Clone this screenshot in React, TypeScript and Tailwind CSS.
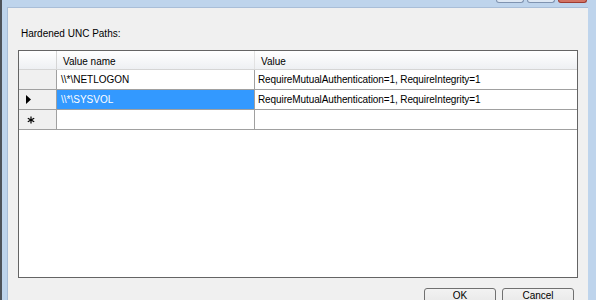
export default function App() {
  return (
    <div className="w-[596px] h-[300px] overflow-hidden flex flex-col bg-[#bed4ec] border-l-2 border-[#4e535a] font-['Liberation_Sans',Arial,sans-serif] text-[10px] text-black">
      {/* caption strip (window top is cut off) */}
      <div className="h-[7px] shrink-0 flex justify-end items-start gap-[3px] pr-[9px]">
        <div className="w-[28px] h-[3px] rounded-b-[3px] border border-t-0 border-[#7f93b0] bg-[#dde7f3]" />
        <div className="w-[28px] h-[3px] rounded-b-[3px] border border-t-0 border-[#7f93b0] bg-[#dde7f3]" />
        <div className="w-[29px] h-[3px] rounded-b-[3px] border border-t-0 border-[#9e3b31] bg-[#d27364]" />
      </div>

      <div className="h-[300px] shrink-0 flex ml-[5px] mr-[8px]">
        <div className="flex-1 flex flex-col bg-[#f0f0f0] border-t border-l border-[#a9bed8]">
          <div className="shrink-0 pt-[20px] pl-[13px] leading-[12px]">Hardened UNC Paths:</div>

          <div className="shrink-0 mt-[10px] ml-[10px] w-[560px] h-[228px] flex flex-col bg-white border border-[#646464]">
            {/* column headers */}
            <div className="h-[19px] shrink-0 flex bg-gradient-to-b from-white to-[#eef0f3] border-b border-[#d5d5d5]">
              <div className="w-[38px] border-r border-[#d5d5d5]" />
              <div className="w-[198px] flex items-center pl-[6px] pt-[2px] border-r border-[#e2e2e2]">Value name</div>
              <div className="flex-1 flex items-center pl-[6px] pt-[2px]">Value</div>
            </div>

            <Row text1="\\*\NETLOGON" text2="RequireMutualAuthentication=1, RequireIntegrity=1" />
            <Row
              text1="\\*\SYSVOL"
              text2="RequireMutualAuthentication=1, RequireIntegrity=1"
              selected
              marker={
                <svg width="6" height="9" viewBox="0 0 6 9">
                  <path d="M0 0 L5 4.5 L0 9 Z" fill="#000" />
                </svg>
              }
            />
            <Row
              text1=""
              text2=""
              marker={
                <svg width="8" height="8" viewBox="0 0 8 8" className="ml-[1px]">
                  <g stroke="#000" strokeWidth="1.2">
                    <line x1="4" y1="0.5" x2="4" y2="7.5" />
                    <line x1="0.8" y1="2.2" x2="7.2" y2="5.8" />
                    <line x1="0.8" y1="5.8" x2="7.2" y2="2.2" />
                  </g>
                </svg>
              }
            />
          </div>

          <div className="shrink-0 mt-[10px] flex justify-end gap-[6px] pr-[14px]">
            <Button label="OK" />
            <Button label="Cancel" />
          </div>
        </div>
      </div>
    </div>
  );
}

function Row({
  text1,
  text2,
  selected,
  marker,
}: {
  text1: string;
  text2: string;
  selected?: boolean;
  marker?: React.ReactNode;
}) {
  return (
    <div className="h-[20px] shrink-0 flex">
      <div className="w-[38px] flex items-center pl-[7px] bg-[#f0f0f0] border-r border-b border-[#a0a0a0]">
        {marker}
      </div>
      <div
        className={`w-[198px] flex items-center pl-[4px] border-r border-b border-[#a0a0a0] ${
          selected ? "bg-[#3399ff] text-white" : ""
        }`}
      >
        {text1}
      </div>
      <div className="flex-1 flex items-center pl-[3px] border-b border-[#a0a0a0] tracking-[-0.1px]">{text2}</div>
    </div>
  );
}

function Button({ label }: { label: string }) {
  return (
    <div className="w-[72px] h-[23px] shrink-0 flex justify-center pt-[1px] leading-[11px] rounded-[3px] border border-[#707070] bg-gradient-to-b from-[#f2f2f2] via-[#ebebeb] to-[#cfcfcf]">
      {label}
    </div>
  );
}
